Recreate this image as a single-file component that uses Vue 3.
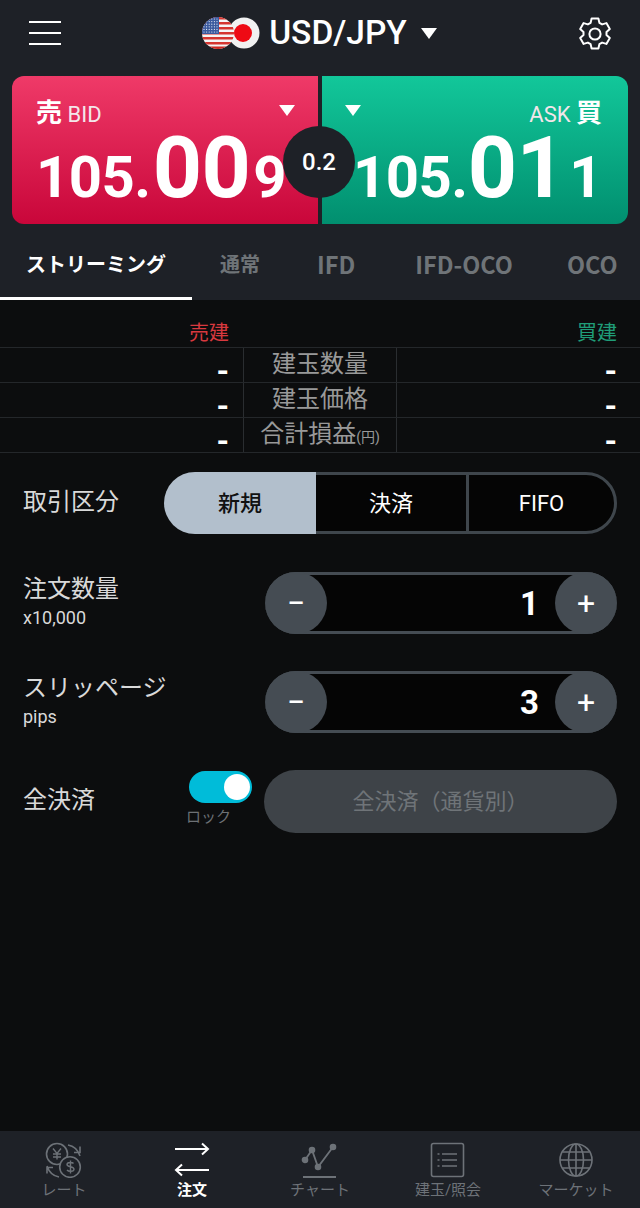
<script setup>
const tabs = ['通常', 'IFD', 'IFD-OCO', 'OCO']
const rows = [
  { label: '建玉数量' },
  { label: '建玉価格' },
  { label: '合計損益', unit: '(円)' }
]
const stars = []
for (let y = 19; y < 33; y += 2.6) {
  for (let x = 204; x < 219; x += 2.6) stars.push({ x, y })
}
</script>

<template>
  <div class="app">
    <header class="top">
      <div class="burger"><i></i><i></i><i></i></div>
      <div class="pair">
        <svg class="flags" width="60" height="34" viewBox="201 16 60 34">
          <defs>
            <clipPath id="usclip"><circle cx="218" cy="33" r="16" /></clipPath>
          </defs>
          <circle cx="244" cy="33" r="15.5" fill="#f1f1f1" />
          <circle cx="243" cy="33" r="9" fill="#ee0a14" />
          <g clip-path="url(#usclip)">
            <rect x="200" y="17" width="36" height="32" fill="#f4f4f4" />
            <rect x="200" y="17" width="36" height="2.5" fill="#d5352f" />
            <rect x="200" y="22" width="36" height="2.5" fill="#d5352f" />
            <rect x="200" y="27" width="36" height="2.5" fill="#d5352f" />
            <rect x="200" y="32" width="36" height="2.5" fill="#d5352f" />
            <rect x="200" y="37" width="36" height="2.5" fill="#d5352f" />
            <rect x="200" y="42" width="36" height="2.5" fill="#d5352f" />
            <rect x="200" y="46.5" width="36" height="3" fill="#c8261f" />
            <rect x="200" y="17" width="19" height="17" fill="#3a5a9e" />
            <circle v-for="(s, i) in stars" :key="i" :cx="s.x" :cy="s.y" r="0.6" fill="#e8ecf6" />
          </g>
        </svg>
        <span class="pair-name">USD/JPY</span>
        <span class="tri head-tri"></span>
      </div>
      <svg class="gear" width="36" height="36" viewBox="0 0 36 36" fill="none" stroke="#fff" stroke-width="2" stroke-linejoin="round">
        <path d="M14.6 2.5h6.8l1 4.4 2.7 1.5 4.3-1.3 3.4 5.8-3.3 3.1v3l3.3 3.1-3.4 5.8-4.3-1.3-2.7 1.5-1 4.4h-6.8l-1-4.4-2.7-1.5-4.3 1.3-3.4-5.8 3.3-3.1v-3l-3.3-3.1 3.4-5.8 4.3 1.3 2.7-1.5z" />
        <circle cx="18" cy="18" r="5.6" />
      </svg>
    </header>

    <section class="quotes">
      <div class="quote bid">
        <div class="quote-head">
          <span class="side"><b>売</b> BID</span>
          <span class="tri"></span>
        </div>
        <div class="price"><span>105.</span><strong>00</strong><span class="last">9</span></div>
      </div>
      <div class="quote ask">
        <div class="quote-head">
          <span class="tri"></span>
          <span class="side">ASK <b>買</b></span>
        </div>
        <div class="price"><span>105.</span><strong>01</strong><span class="last">1</span></div>
      </div>
      <div class="spread">0.2</div>
    </section>

    <nav class="tabs">
      <div class="tab active">ストリーミング</div>
      <div class="tab tab1">{{ tabs[0] }}</div>
      <div class="tab tab2">{{ tabs[1] }}</div>
      <div class="tab tab3">{{ tabs[2] }}</div>
      <div class="tab tab4">{{ tabs[3] }}</div>
    </nav>

    <main class="content">
      <div class="summary-head">
        <span class="sell">売建</span>
        <span class="buy">買建</span>
      </div>
      <div v-for="row in rows" :key="row.label" class="summary-row">
        <div class="val">-</div>
        <div class="mid">{{ row.label }}<small v-if="row.unit">{{ row.unit }}</small></div>
        <div class="val">-</div>
      </div>

      <div class="form-row seg-row">
        <div class="label">取引区分</div>
        <div class="seg">
          <div class="seg-item on"><span>新規</span></div>
          <div class="seg-item"><span>決済</span></div>
          <div class="seg-item last"><span>FIFO</span></div>
        </div>
      </div>

      <div class="form-row qty-row">
        <div class="label-wrap">
          <div class="label">注文数量</div>
          <div class="sub">x10,000</div>
        </div>
        <div class="stepper">
          <div class="step">−</div>
          <div class="num">1</div>
          <div class="step">+</div>
        </div>
      </div>

      <div class="form-row slip-row">
        <div class="label-wrap">
          <div class="label">スリッページ</div>
          <div class="sub">pips</div>
        </div>
        <div class="stepper">
          <div class="step">−</div>
          <div class="num">3</div>
          <div class="step">+</div>
        </div>
      </div>

      <div class="form-row close-row">
        <div class="label">全決済</div>
        <div class="lock">
          <div class="toggle"><i></i></div>
          <div class="lock-text">ロック</div>
        </div>
        <div class="close-btn">全決済（通貨別）</div>
      </div>
    </main>

    <footer class="nav">
      <div class="nav-item">
        <svg width="38" height="36" viewBox="0 0 38 36" fill="none" stroke="#6d7278" stroke-width="1.6">
          <circle cx="12" cy="12" r="10.500" />
          <circle cx="25" cy="25" r="10.300" fill="#1e2127" />
          <path d="M8 6.500l4 5 4-5M12 11.500v6M8 12h8M8 15h8" stroke-width="1.4" />
          <path d="M28.500 21.500c-1-1.500-6.500-1.500-6.500 1 0 3 7 1.500 7 4.800 0 2.500-5.500 2.500-7 .7M25.500 18.500v13" stroke-width="1.4" />
          <path d="M23 3c6 1 10 5 12 11M35 4.500v6h-6M14 35c-6-1-10-5-12-11M2 31.500v-6h6" />
        </svg>
        <span>レート</span>
      </div>
      <div class="nav-item active">
        <svg width="38" height="36" viewBox="0 0 38 36" fill="none" stroke="#fff" stroke-width="2">
          <path d="M2 7h33M29 1.500l6 5.500-6 5.500" />
          <path d="M36 28H3M9 22.500L3 28l6 5.500" />
        </svg>
        <span>注文</span>
      </div>
      <div class="nav-item">
        <svg width="38" height="36" viewBox="0 0 38 36" fill="none" stroke="#6d7278" stroke-width="1.800">
          <path d="M4 18l7-10 6 17 15-20" />
          <circle cx="4" cy="18" r="2.400" fill="#6d7278" />
          <circle cx="11" cy="8" r="2.400" fill="#6d7278" />
          <circle cx="17" cy="25" r="2.400" fill="#6d7278" />
          <circle cx="32" cy="5" r="2.400" fill="#6d7278" />
          <path d="M2 35h33" />
        </svg>
        <span>チャート</span>
      </div>
      <div class="nav-item">
        <svg width="38" height="36" viewBox="0 0 38 36" fill="none" stroke="#6d7278" stroke-width="1.600">
          <rect x="2.500" y="1.500" width="32" height="33" rx="2" />
          <path d="M13 12h15M13 18h15M13 24h15" />
          <path d="M8.500 12h2M8.500 18h2M8.500 24h2" />
        </svg>
        <span>建玉/照会</span>
      </div>
      <div class="nav-item">
        <svg width="38" height="36" viewBox="0 0 38 36" fill="none" stroke="#6d7278" stroke-width="1.600">
          <circle cx="19" cy="18" r="16" />
          <ellipse cx="19" cy="18" rx="7.500" ry="16" />
          <path d="M19 2v32M3 18h32M5.500 10h27M5.500 26h27" />
        </svg>
        <span>マーケット</span>
      </div>
    </footer>
  </div>
</template>

<style>
body {
  background: #0c0d0e;
}
</style>

<style scoped>
.app {
  width: 640px;
  height: 1208px;
  display: flex;
  flex-direction: column;
  background: #0c0d0e;
  color: #fff;
  font-family: Roboto, "Noto Sans CJK JP", sans-serif;
  overflow: hidden;
}

.top {
  height: 76px;
  flex: none;
  background: #1e2127;
  display: flex;
  align-items: center;
  justify-content: space-between;
  padding: 0 27px 10px 29px;
  box-sizing: border-box;
}

.burger {
  width: 32px;
  display: flex;
  flex-direction: column;
  gap: 9px;
}

.burger i {
  display: block;
  height: 2px;
  background: #fff;
}

.pair {
  display: flex;
  align-items: center;
}

.flags {
  display: block;
}

.gear {
  margin-top: 1px;
}

.pair-name {
  font-size: 33.5px;
  font-weight: 500;
  margin-left: 8px;
  line-height: 36px;
}

.tri {
  display: block;
  width: 0;
  height: 0;
  border-left: 8px solid transparent;
  border-right: 8px solid transparent;
  border-top: 11px solid #fff;
}

.head-tri {
  margin-left: 14px;
}

.quotes {
  flex: none;
  height: 148px;
  padding: 0 12px;
  display: flex;
  gap: 4px;
  background: #1e2127;
  position: relative;
}

.quote {
  flex: 1;
  box-sizing: border-box;
  padding: 19px 0 0;
}

.bid {
  border-radius: 12px 0 0 12px;
  background: linear-gradient(#ef3a68, #c9063a);
}

.ask {
  border-radius: 0 12px 12px 0;
  background: linear-gradient(#12c79a, #018f6f);
}

.quote-head {
  display: flex;
  align-items: flex-start;
  justify-content: space-between;
  height: 33px;
  padding: 0 23px 0 24px;
}

.quote-head .tri {
  margin-top: 10px;
}

.ask .quote-head {
  padding: 0 26px 0 23px;
}

.side {
  font-size: 22px;
  line-height: 36px;
  color: #f3e6ea;
  font-weight: 400;
}

.side b {
  font-size: 26px;
  font-weight: 700;
  color: #fff;
}

.price {
  display: flex;
  align-items: baseline;
  font-weight: 700;
  font-size: 58px;
  line-height: 84px;
  height: 84px;
  margin-top: -2px;
  padding-left: 24px;
  letter-spacing: -0.5px;
}

.bid strong {
  margin-left: 2px;
}

.bid .last {
  margin-left: 3px;
}

.ask .price {
  padding-left: 31px;
}

.price strong {
  font-size: 86px;
  font-weight: 700;
}

.ask .last {
  margin-left: 4px;
}

.spread {
  position: absolute;
  left: 283px;
  top: 50px;
  width: 72px;
  height: 72px;
  border-radius: 50%;
  background: #1e2127;
  display: flex;
  align-items: center;
  justify-content: center;
  font-size: 24px;
  font-weight: 500;
}

.tabs {
  flex: none;
  height: 76px;
  background: #1e2127;
  display: flex;
  align-items: center;
  color: #6f7478;
  font-family: "Noto Sans CJK JP", sans-serif;
  font-size: 23.5px;
  font-weight: 700;
  box-sizing: border-box;
}

.tab {
  height: 76px;
  line-height: 80px;
  white-space: nowrap;
  box-sizing: border-box;
  text-align: center;
}

.tab.active {
  width: 192px;
  color: #fff;
  font-size: 20px;
  border-bottom: 3px solid #fff;
}

.tab1 {
  margin-left: 28px;
  font-size: 20px;
}

.tab2 {
  margin-left: 57px;
}

.tab3 {
  margin-left: 60px;
}

.tab4 {
  margin-left: 54px;
}

.content {
  flex: 1;
  background: #0c0d0e;
}

.summary-head {
  height: 48px;
  border-bottom: 1px solid #24272a;
  box-sizing: border-box;
  display: grid;
  grid-template-columns: 243px 154px 1fr;
  align-items: end;
  font-size: 20px;
  line-height: 28px;
}

.sell {
  color: #d8393f;
  text-align: right;
  padding-right: 14px;
}

.buy {
  grid-column: 3;
  color: #1f9d78;
  text-align: right;
  padding-right: 23px;
}

.summary-row {
  height: 35px;
  display: grid;
  grid-template-columns: 243px 154px 1fr;
  grid-template-rows: 34px;
  border-bottom: 1px solid #24272a;
  box-sizing: border-box;
}

.mid {
  border-left: 1px solid #2a2d30;
  border-right: 1px solid #2a2d30;
  text-align: center;
  font-size: 24px;
  line-height: 33px;
  height: 34px;
  color: #999;
  white-space: nowrap;
}

.mid small {
  font-size: 14px;
}

.val {
  text-align: right;
  padding-right: 14px;
  font-size: 32px;
  font-weight: 700;
  line-height: 46px;
  height: 34px;
}

.val:last-child {
  padding-right: 23px;
}

.form-row {
  display: flex;
  align-items: center;
  justify-content: space-between;
  padding: 0 23px;
}

.label-wrap {
  padding-bottom: 4px;
}

.label {
  font-size: 24px;
  line-height: 34px;
  color: #d9d9d9;
}

.sub {
  font-size: 18px;
  line-height: 24px;
  color: #d9d9d9;
}

.seg-row {
  margin-top: 19px;
}

.seg-row .label {
  padding-bottom: 2px;
}

.seg {
  width: 453px;
  height: 62px;
  display: grid;
  grid-template-columns: 152px 150px 151px;
  font-size: 22px;
}

.seg-item {
  display: flex;
  align-items: center;
  justify-content: center;
  box-sizing: border-box;
  background: #050505;
  border-top: 3px solid #3f464c;
  border-bottom: 3px solid #3f464c;
}

.seg-item span {
  padding-bottom: 5px;
}

.seg-item.on {
  border: none;
  border-radius: 31px 0 0 31px;
  background: #b2bfcc;
  color: #111;
  font-weight: 500;
}

.seg-item.last {
  border-left: 3px solid #3f464c;
  border-right: 3px solid #3f464c;
  border-radius: 0 31px 31px 0;
}

.seg-item.last span {
  padding-bottom: 0;
}

.qty-row {
  margin-top: 38px;
}

.slip-row {
  margin-top: 37px;
}

.close-row {
  margin-top: 37px;
  justify-content: flex-start;
  height: 63px;
}

.close-row .label {
  width: 163px;
  padding-bottom: 3px;
}

.stepper {
  width: 352px;
  height: 62px;
  box-sizing: border-box;
  background: #050505;
  border-top: 3px solid #454c53;
  border-bottom: 3px solid #454c53;
  border-radius: 31px;
  display: flex;
  align-items: center;
}

.step {
  width: 62px;
  height: 62px;
  margin: -3px 0;
  flex: none;
  border-radius: 50%;
  background: #454c53;
  display: flex;
  align-items: center;
  justify-content: center;
  font-size: 32px;
  font-weight: 400;
  color: #fff;
}

.num {
  flex: 1;
  text-align: right;
  padding-right: 16px;
  font-size: 33px;
  font-weight: 700;
}

.lock {
  width: 78px;
  align-self: flex-start;
  padding-top: 1px;
}

.toggle {
  width: 63px;
  height: 32px;
  border-radius: 16px;
  background: #00bcd9;
  margin-left: 3px;
  display: flex;
  align-items: center;
  justify-content: flex-end;
  padding-right: 2px;
  box-sizing: border-box;
}

.toggle i {
  display: block;
  width: 26px;
  height: 26px;
  border-radius: 50%;
  background: #fff;
}

.lock-text {
  font-size: 15px;
  line-height: 22px;
  margin-top: 3px;
  color: #6d7175;
}

.close-btn {
  width: 353px;
  height: 63px;
  border-radius: 32px;
  background: #3e4348;
  color: #6f7478;
  font-size: 22px;
  padding-bottom: 5px;
  box-sizing: border-box;
  display: flex;
  align-items: center;
  justify-content: center;
}

.nav {
  flex: none;
  height: 77px;
  background: #1e2127;
  display: grid;
  grid-template-columns: repeat(5, 128px);
}

.nav-item {
  display: flex;
  flex-direction: column;
  align-items: center;
  padding-top: 11px;
  font-size: 15px;
  line-height: 20px;
  color: #6d7278;
}

.nav-item span {
  margin-top: 2px;
}

.nav-item.active {
  color: #fff;
  font-weight: 700;
}
</style>
